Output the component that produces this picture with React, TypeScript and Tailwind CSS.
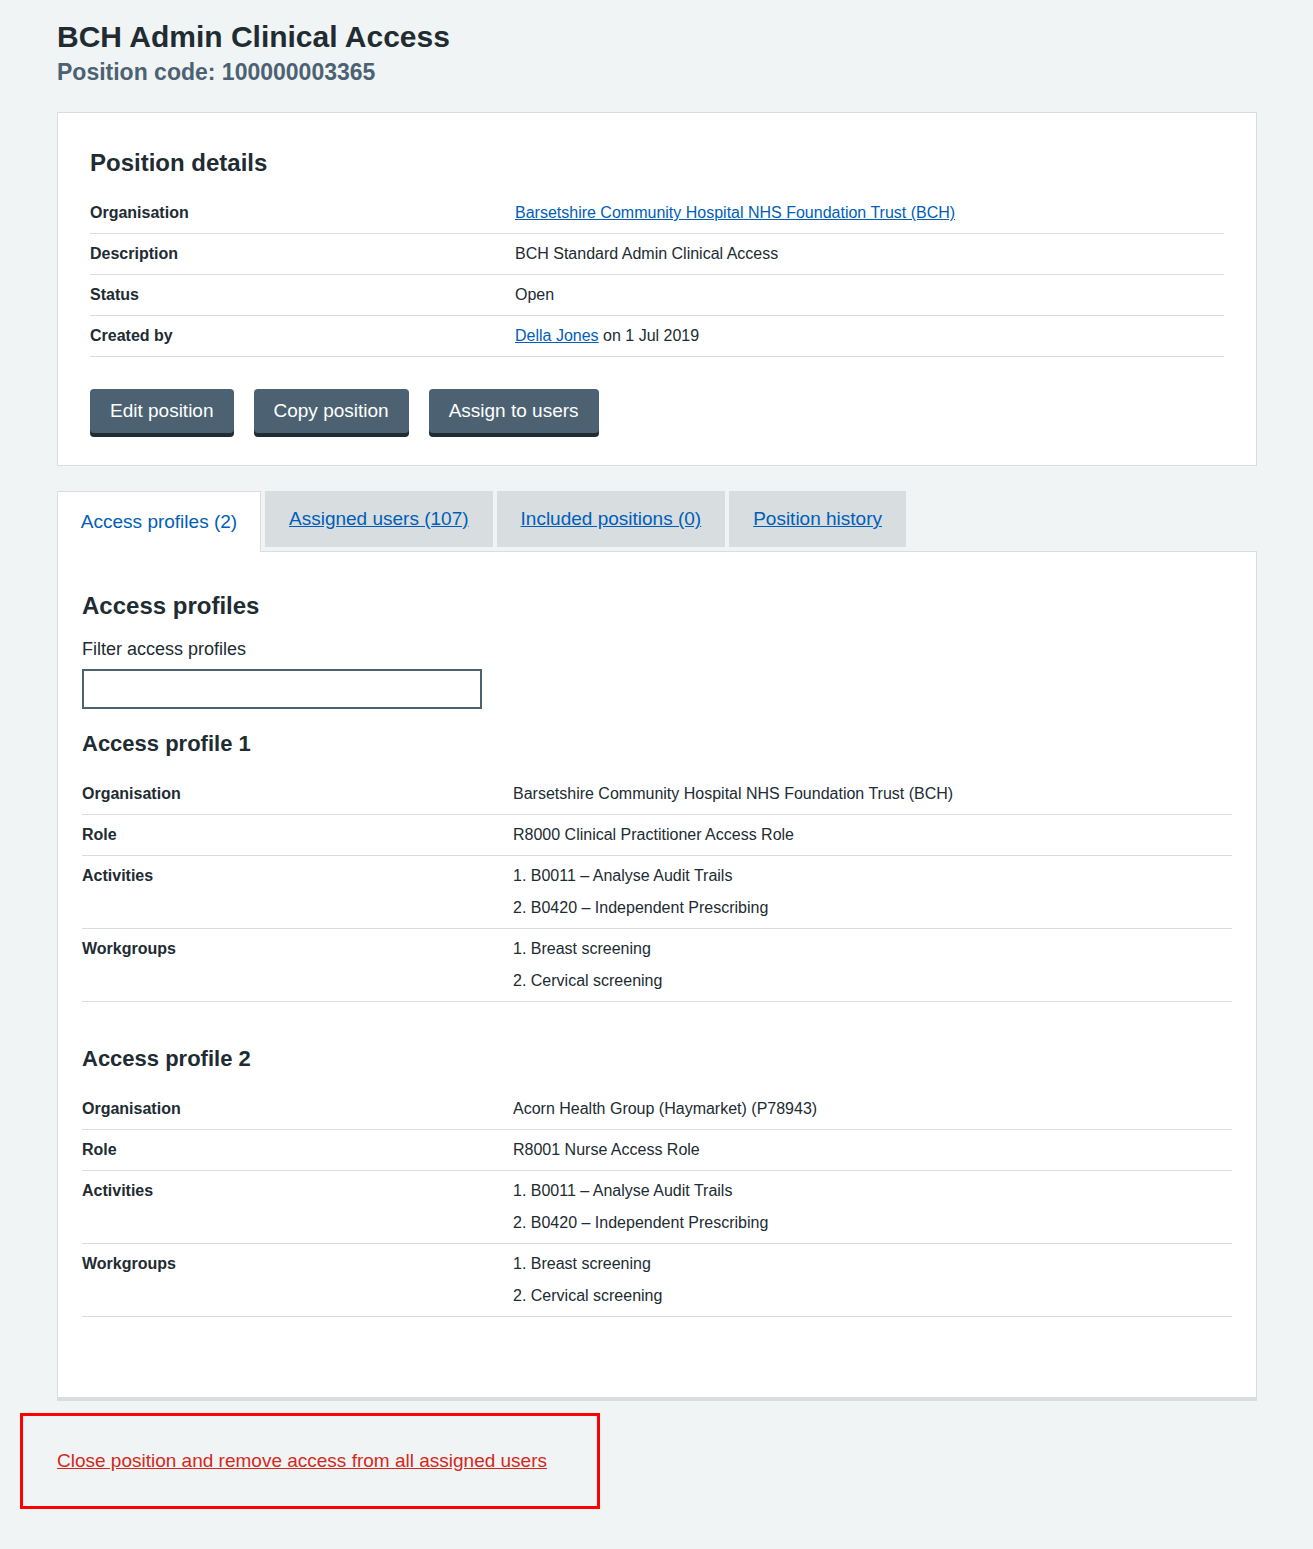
const font = { fontFamily: '"Liberation Sans", Arial, sans-serif' };

function Row({ k, children }: { k: string; children: React.ReactNode }) {
  return (
    <div className="flex border-b border-[#d8dde0] py-[9px] text-[16px] leading-[22px]">
      <div className="w-[425px] shrink-0 font-bold text-[#212b32]">{k}</div>
      <div className="text-[#212b32]">{children}</div>
    </div>
  );
}

function List({ items }: { items: string[] }) {
  return (
    <ol className="space-y-[10px]">
      {items.map((t, i) => (
        <li key={t}>{i + 1}. {t}</li>
      ))}
    </ol>
  );
}

function Profile({ n, org, role }: { n: number; org: string; role: string }) {
  return (
    <div className="mb-[40px]">
      <h3 className="text-[22px] font-bold text-[#212b32] mb-[14px]">Access profile {n}</h3>
      <div className="[&>div>div:first-child]:w-[431px]">
        <Row k="Organisation">{org}</Row>
        <Row k="Role">{role}</Row>
        <Row k="Activities"><List items={["B0011 – Analyse Audit Trails", "B0420 – Independent Prescribing"]} /></Row>
        <Row k="Workgroups"><List items={["Breast screening", "Cervical screening"]} /></Row>
      </div>
    </div>
  );
}

export default function App() {
  const link = "text-[#005eb8] underline";
  return (
    <div style={font} className="min-h-[1549px] bg-[#f0f4f5] pt-[18px] pb-[24px] text-[#212b32]">
      <div className="mx-[57px] w-[1200px]">
        <h1 className="text-[30px] font-bold leading-[38px]">BCH Admin Clinical Access</h1>
        <p className="text-[23px] font-bold text-[#4c6272] leading-[32px]">Position code: 100000003365</p>

        <div className="mt-[24px] bg-white border border-[#d8dde0] px-[32px] pt-[32px] pb-[32px]">
          <h2 className="text-[24px] font-bold mb-[12px]">Position details</h2>
          <Row k="Organisation"><a className={link}>Barsetshire Community Hospital NHS Foundation Trust (BCH)</a></Row>
          <Row k="Description">BCH Standard Admin Clinical Access</Row>
          <Row k="Status">Open</Row>
          <Row k="Created by"><a className={link}>Della Jones</a> on 1 Jul 2019</Row>
          <div className="mt-[32px] flex gap-[20px]">
            {["Edit position", "Copy position", "Assign to users"].map((b) => (
              <button key={b} className="h-[44px] rounded-[4px] bg-[#4c6272] px-[20px] text-[19px] text-white shadow-[0_4px_0_#212b32]">{b}</button>
            ))}
          </div>
        </div>

        <div className="mt-[24px] flex items-end gap-[4px] h-[61px]">
          <div className="h-[61px] w-[204px] border border-b-0 border-[#d8dde0] bg-white flex items-center justify-center text-[19px] text-[#005eb8] relative top-px">Access profiles (2)</div>
          {["Assigned users (107)", "Included positions (0)", "Position history"].map((t) => (
            <div key={t} className="h-[56px] mb-[4px] bg-[#d8dde0] px-[24px] flex items-center text-[19px] text-[#005eb8] underline">{t}</div>
          ))}
        </div>
        <div className="bg-white border border-[#d8dde0] border-b-4 px-[24px] pt-[36px] pb-[40px]">
          <h2 className="text-[24px] font-bold mb-[12px]">Access profiles</h2>
          <label className="block text-[18px] mb-[6px]">Filter access profiles</label>
          <input className="block w-[400px] h-[40px] border-2 border-[#4c6272] mb-[18px]" />
          <Profile n={1} org="Barsetshire Community Hospital NHS Foundation Trust (BCH)" role="R8000 Clinical Practitioner Access Role" />
          <Profile n={2} org="Acorn Health Group (Haymarket) (P78943)" role="R8001 Nurse Access Role" />
        </div>
      </div>
      <div className="mt-[12px] ml-[20px] w-[580px] h-[96px] border-[3px] border-[#ff0000] flex items-center pl-[34px]">
        <a className="text-[19px] text-[#d5281b] underline">Close position and remove access from all assigned users</a>
      </div>
    </div>
  );
}
